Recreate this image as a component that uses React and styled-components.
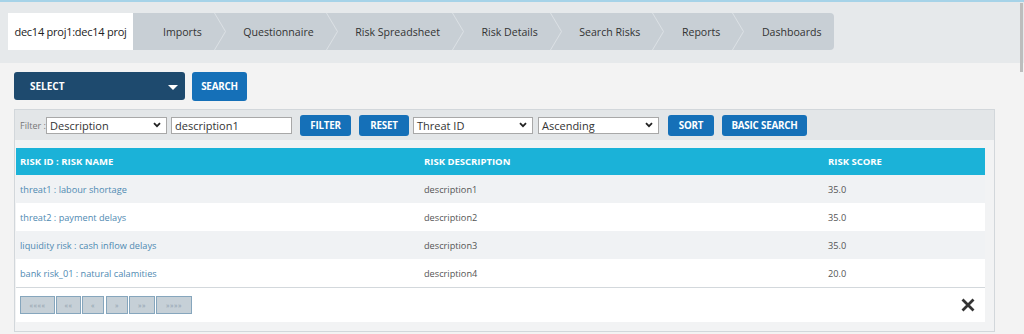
import React from "react";
import styled, { createGlobalStyle, css } from "styled-components";

const GlobalStyle = createGlobalStyle`
  html, body { margin: 0; padding: 0; }
  body {
    background: #f3f3f3;
    font-family: "Open Sans", "Noto Sans", sans-serif;
    color: #333;
    overflow: hidden;
  }
  * { box-sizing: border-box; }
`;

const Page = styled.div`
  width: 1024px;
  height: 334px;
  position: relative;
`;

const ScrollThumb = styled.div`
  position: absolute;
  right: 1px;
  top: 3px;
  width: 3px;
  height: 69px;
  background: #bdbdbd;
`;

const Header = styled.header`
  border-top: 2px solid #a6d3e8;
  background: #e6e9eb;
  height: 63px;
  padding: 11px 8px 0;
`;

const Tabs = styled.nav`
  display: flex;
  height: 37px;
`;

const ActiveTab = styled.div`
  width: 125px;
  background: #ffffff;
  display: flex;
  align-items: center;
  justify-content: center;
  font-size: 11px;
  letter-spacing: -0.25px;
  color: #222;
`;

const Strip = styled.div`
  display: flex;
  background: #c8cfd5;
  border-radius: 0 4px 4px 0;
`;

const Tab = styled.div`
  position: relative;
  display: flex;
  align-items: center;
  font-size: 10.6px;
  color: #333;
  white-space: nowrap;
  padding: 0 ${(p) => (p.$last ? 12 : 24)}px 0 ${(p) => (p.$first ? 30 : 17.5)}px;
`;

const Chevron = styled.svg`
  position: absolute;
  top: 0;
  right: 0;
  width: 12px;
  height: 37px;
  z-index: 1;
`;

const Content = styled.main`
  padding: 9px 14px 0;
`;

const TopRow = styled.div`
  display: flex;
  gap: 7px;
  align-items: flex-start;
`;

const SelectBox = styled.div`
  width: 171px;
  height: 28px;
  background: #1e4a6e;
  border-radius: 3px;
  color: #fff;
  font-size: 10px;
  font-weight: 700;
  display: flex;
  align-items: center;
  justify-content: space-between;
  padding: 0 7px 0 16px;
`;

const Caret = styled.span`
  width: 0;
  height: 0;
  border-left: 5px solid transparent;
  border-right: 5px solid transparent;
  border-top: 5px solid #fff;
  margin-top: 2px;
`;

const Button = styled.button`
  border: none;
  border-radius: 3px;
  background: #1570b8;
  color: #fff;
  font-family: inherit;
  font-weight: 700;
  font-size: 9.8px;
  padding: 0;
  width: ${(p) => p.$w}px;
  height: ${(p) => p.$h}px;
  margin-left: ${(p) => p.$ml || 0}px;
  display: flex;
  align-items: center;
  justify-content: center;
  letter-spacing: -0.2px;
`;

const Panel = styled.section`
  margin-top: 8px;
  width: 981px;
  border: 1px solid #d2d7db;
  background: #f2f3f4;
`;

const FilterBar = styled.div`
  height: 30px;
  background: #e3e6e8;
  display: flex;
  align-items: center;
  gap: 4px;
  padding-left: 5px;
`;

const FilterLabel = styled.span`
  font-size: 9px;
  color: #777;
  width: 26px;
  margin-right: -4px;
  white-space: nowrap;
`;

const Field = styled.div`
  width: ${(p) => p.$w}px;
  height: 17px;
  flex: none;
  background: #fff;
  border: 1px solid #a8a8a8;
  display: flex;
  align-items: center;
  justify-content: space-between;
  padding: 0 5px 0 3px;
  font-size: 11px;
  color: #333;
  line-height: 1;
  margin-left: ${(p) => p.$ml || 0}px;
`;

const DownIcon = () => (
  <svg width="8" height="6" viewBox="0 0 8 6">
    <path d="M1 1.2 L4 4.2 L7 1.2" fill="none" stroke="#222" strokeWidth="1.8" />
  </svg>
);

const TableWrap = styled.div`
  margin: 8px 9px 0 1px;
`;

const Grid = styled.div`
  display: grid;
  grid-template-columns: 404px 404px 1fr;
  align-items: center;
  height: ${(p) => p.$h}px;
  padding-left: 4px;
  ${(p) =>
    p.$head
      ? css`
          background: #1bb2d8;
          color: #fff;
          font-weight: 700;
          font-size: 9.5px;
        `
      : css`
          background: ${p.$alt ? "#f0f2f4" : "#ffffff"};
          font-size: 9.2px;
          color: #555;
        `}
`;

const LinkCell = styled.span`
  color: #4f8ab2;
`;

const Pager = styled.div`
  border-top: 1px solid #d3d8dc;
  background: #fff;
  height: 35px;
  display: flex;
  align-items: center;
  justify-content: space-between;
  padding: 0 10px 0 4px;
`;

const PageButtons = styled.div`
  display: flex;
  gap: 1px;
`;

const PageBtn = styled.span`
  width: ${(p) => p.$w}px;
  height: 18px;
  background: #c6d0d7;
  border: 1px solid #86a6bd;
  color: #8d9eab;
  font-size: 7px;
  display: flex;
  align-items: center;
  justify-content: center;
  letter-spacing: 0.5px;
  margin-left: ${(p) => p.$ml || 0}px;
`;

const CloseIcon = () => (
  <svg width="14" height="14" viewBox="0 0 14 14">
    <path d="M1.5 1.5 L12.5 12.5 M12.5 1.5 L1.5 12.5" stroke="#333" strokeWidth="2.8" />
  </svg>
);

const PanelFoot = styled.div`
  height: 9px;
`;

const tabs = ["Imports", "Questionnaire", "Risk Spreadsheet", "Risk Details", "Search Risks", "Reports", "Dashboards"];

const rows = [
  ["threat1 : labour shortage", "description1", "35.0"],
  ["threat2 : payment delays", "description2", "35.0"],
  ["liquidity risk : cash inflow delays", "description3", "35.0"],
  ["bank risk_01 : natural calamities", "description4", "20.0"],
];

const pages = [
  { t: "««««", w: 35 },
  { t: "««", w: 25 },
  { t: "«", w: 22 },
  { t: "»", w: 22, ml: 1 },
  { t: "»»", w: 26 },
  { t: "»»»»", w: 36 },
];

export default function App() {
  return (
    <Page>
      <GlobalStyle />
      <ScrollThumb />
      <Header>
        <Tabs>
          <ActiveTab>dec14 proj1:dec14 proj</ActiveTab>
          <Strip>
            {tabs.map((t, i) => (
              <Tab key={t} $first={i === 0} $last={i === tabs.length - 1}>
                {t}
                {i < tabs.length - 1 && (
                  <Chevron viewBox="0 0 12 37">
                    <path d="M0.5 0 L11.5 18.5 L0.5 37" fill="none" stroke="#dce1e5" strokeWidth="1" />
                  </Chevron>
                )}
              </Tab>
            ))}
          </Strip>
        </Tabs>
      </Header>
      <Content>
        <TopRow>
          <SelectBox>
            SELECT
            <Caret />
          </SelectBox>
          <Button $w={55} $h={29}>SEARCH</Button>
        </TopRow>
        <Panel>
          <FilterBar>
            <FilterLabel>Filter :</FilterLabel>
            <Field $w={121}>
              Description
              <DownIcon />
            </Field>
            <Field $w={121}>description1</Field>
            <Button $w={51} $h={21} $ml={4}>FILTER</Button>
            <Button $w={50} $h={21} $ml={4}>RESET</Button>
            <Field $w={120}>
              Threat ID
              <DownIcon />
            </Field>
            <Field $w={121} $ml={1}>
              Ascending
              <DownIcon />
            </Field>
            <Button $w={46} $h={21} $ml={5}>SORT</Button>
            <Button $w={85} $h={21} $ml={4}>BASIC SEARCH</Button>
          </FilterBar>
          <TableWrap>
            <Grid $head $h={27}>
              <span>RISK ID : RISK NAME</span>
              <span>RISK DESCRIPTION</span>
              <span>RISK SCORE</span>
            </Grid>
            {rows.map((r, i) => (
              <Grid key={r[0]} $h={28} $alt={i % 2 === 0}>
                <LinkCell>{r[0]}</LinkCell>
                <span>{r[1]}</span>
                <span>{r[2]}</span>
              </Grid>
            ))}
            <Pager>
              <PageButtons>
                {pages.map((p, i) => (
                  <PageBtn key={i} $w={p.w} $ml={p.ml}>
                    {p.t}
                  </PageBtn>
                ))}
              </PageButtons>
              <CloseIcon />
            </Pager>
          </TableWrap>
          <PanelFoot />
        </Panel>
      </Content>
    </Page>
  );
}
